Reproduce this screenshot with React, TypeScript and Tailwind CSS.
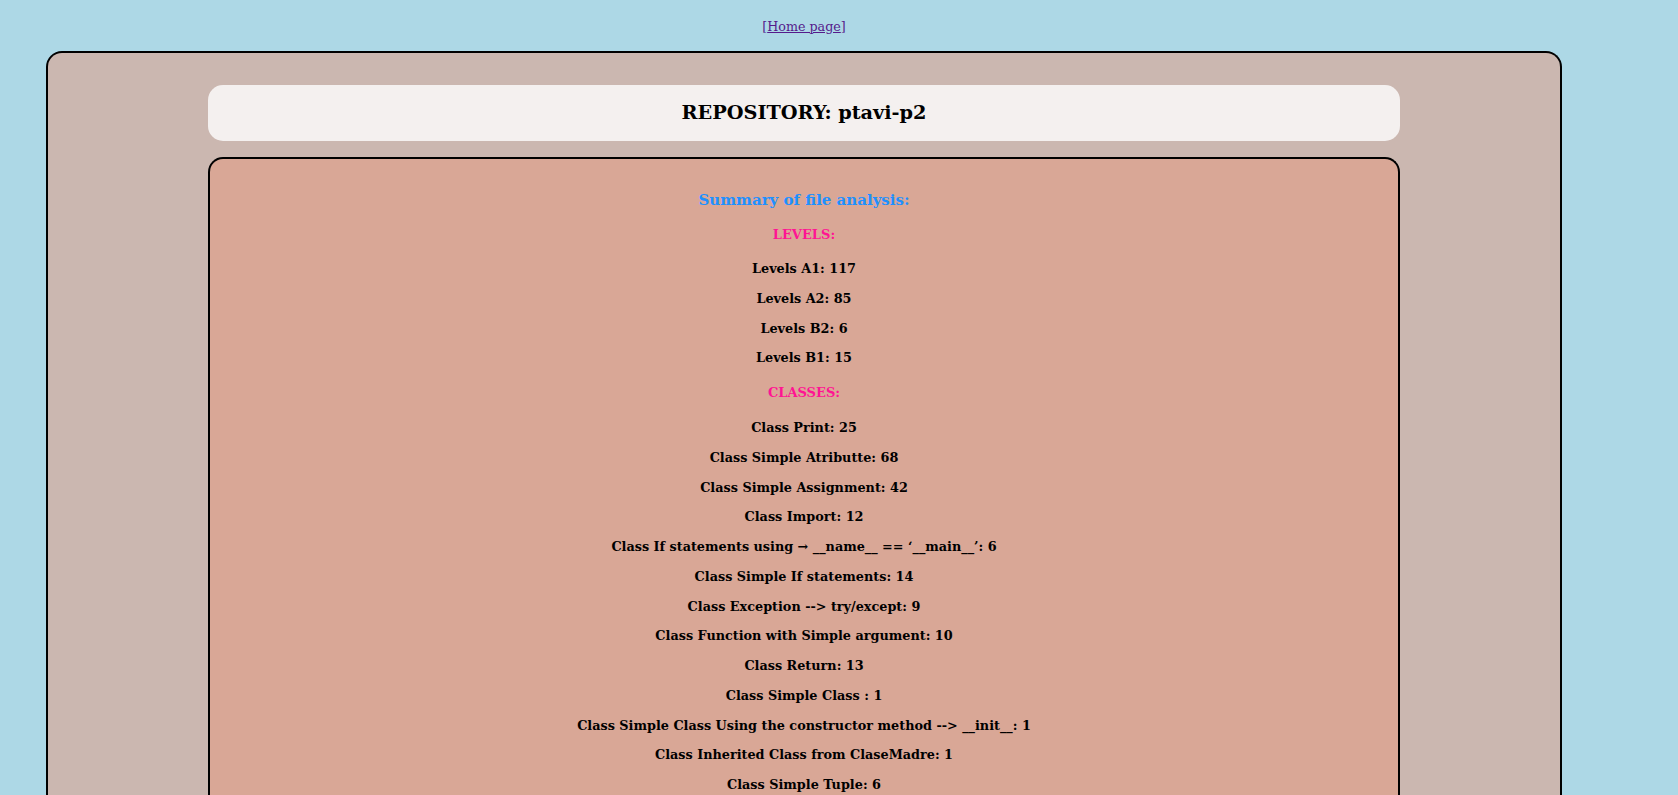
const LEVELS: [string, number][] = [
  ["Levels A1", 117],
  ["Levels A2", 85],
  ["Levels B2", 6],
  ["Levels B1", 15],
];

const CLASSES: [string, number][] = [
  ["Class Print", 25],
  ["Class Simple Atributte", 68],
  ["Class Simple Assignment", 42],
  ["Class Import", 12],
  ["Class If statements using \u2192 __name__ == \u2018__main__\u2019", 6],
  ["Class Simple If statements", 14],
  ["Class Exception --> try/except", 9],
  ["Class Function with Simple argument", 10],
  ["Class Return", 13],
  ["Class Simple Class ", 1],
  ["Class Simple Class Using the constructor method --> __init__", 1],
  ["Class Inherited Class from ClaseMadre", 1],
  ["Class Simple Tuple", 6],
];

function Item({ label, value }: { label: string; value: number }) {
  return (
    <p className="h-[29.75px] leading-[29.75px] text-[12.8px] font-bold text-black">
      {label}: {value}
    </p>
  );
}

export default function App() {
  return (
    <div className="min-h-screen bg-[#add8e6] pt-[16px] font-['DejaVu_Serif',serif]">
      <div className="w-[1516px] ml-[46px]">
        <div className="h-[35px] text-center text-[12.7px] leading-[22px] text-[#551a8b]">
          [<a href="#" className="underline">Home page</a>]
        </div>

        <div className="rounded-t-[16px] border-2 border-black border-b-0 bg-[#cbb7b0] px-[160px] pt-[32px] min-h-[760px]">
          <header className="h-[56px] rounded-[15px] bg-[#f4f0ef] flex items-center justify-center">
            <h1 className="text-[19.3px] font-bold text-black">REPOSITORY: ptavi-p2</h1>
          </header>

          <section className="mt-[16px] rounded-t-[15px] border-2 border-black border-b-0 bg-[#d9a796] pt-[26px] pb-10 text-center min-h-[700px]">
            <h3 className="h-[30px] leading-[30px] text-[15px] font-bold text-[#1e90ff]">
              Summary of file analysis:
            </h3>
            <h4 className="h-[39px] leading-[39px] text-[13px] font-bold text-[#ff1493]">LEVELS:</h4>
            {LEVELS.map(([l, v]) => (
              <Item key={l} label={l} value={v} />
            ))}
            <h4 className="h-[40px] leading-[40px] text-[13px] font-bold text-[#ff1493]">CLASSES:</h4>
            {CLASSES.map(([l, v]) => (
              <Item key={l} label={l} value={v} />
            ))}
          </section>
        </div>
      </div>
    </div>
  );
}
